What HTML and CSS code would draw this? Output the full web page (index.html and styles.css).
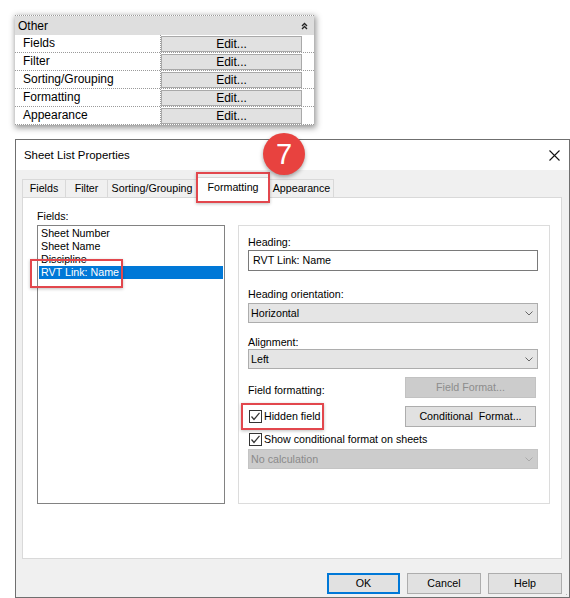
FILE: index.html
```html
<!DOCTYPE html>
<html>
<head>
<meta charset="utf-8">
<link rel="stylesheet" href="styles.css">
</head>
<body>
<div class="props">
  <div class="props-head"><span>Other</span>
    <svg class="collapse" width="7" height="8" viewBox="0 0 7 8"><polyline points="1,4 3.5,1.5 6,4" fill="none" stroke="#222" stroke-width="1.3"/><polyline points="1,7 3.5,4.5 6,7" fill="none" stroke="#222" stroke-width="1.3"/></svg>
  </div>
  <div class="prow"><div class="pname">Fields</div><div class="pval"><div class="edit">Edit...</div></div></div>
  <div class="prow"><div class="pname">Filter</div><div class="pval"><div class="edit">Edit...</div></div></div>
  <div class="prow"><div class="pname">Sorting/Grouping</div><div class="pval"><div class="edit">Edit...</div></div></div>
  <div class="prow"><div class="pname">Formatting</div><div class="pval"><div class="edit">Edit...</div></div></div>
  <div class="prow"><div class="pname">Appearance</div><div class="pval"><div class="edit">Edit...</div></div></div>
</div>

<div class="dialog">
  <div class="titlebar">
    <span class="title">Sheet List Properties</span>
    <svg width="11" height="11" viewBox="0 0 11 11"><path d="M0.5 0.5 L10.5 10.5 M10.5 0.5 L0.5 10.5" stroke="#111" stroke-width="1.1" fill="none"/></svg>
  </div>
  <div class="dbody">
    <div class="tabs">
      <div class="tab t-fields">Fields</div>
      <div class="tab t-filter">Filter</div>
      <div class="tab t-sort">Sorting/Grouping</div>
      <div class="tab t-format active">Formatting</div>
      <div class="tab t-appear">Appearance</div>
    </div>
    <div class="panel">
      <div class="fields-col">
        <div class="lbl">Fields:</div>
        <div class="listbox">
          <div class="item">Sheet Number</div>
          <div class="item">Sheet Name</div>
          <div class="item">Discipline</div>
          <div class="item sel">RVT Link: Name</div>
        </div>
      </div>
      <div class="group">
        <div class="lbl l-heading">Heading:</div>
        <div class="input">RVT Link: Name</div>
        <div class="lbl l-orient">Heading orientation:</div>
        <div class="select"><span>Horizontal</span><svg width="8" height="5" viewBox="0 0 8 5"><polyline points="0.5,0.5 4,4 7.5,0.5" fill="none" stroke="#666" stroke-width="1"/></svg></div>
        <div class="lbl l-align">Alignment:</div>
        <div class="select"><span>Left</span><svg width="8" height="5" viewBox="0 0 8 5"><polyline points="0.5,0.5 4,4 7.5,0.5" fill="none" stroke="#666" stroke-width="1"/></svg></div>
        <div class="row r-ff">
          <div class="lbl l-ff">Field formatting:</div>
          <div class="btn disabled">Field Format...</div>
        </div>
        <div class="row r-hidden">
          <div class="check"><span class="box"><svg width="11" height="11" viewBox="0 0 11 11"><polyline points="1.5,5.5 4,8.5 9.5,1.8" fill="none" stroke="#333" stroke-width="1.2"/></svg></span>Hidden field</div>
          <div class="btn">Conditional &nbsp;Format...</div>
        </div>
        <div class="check c-show"><span class="box"><svg width="11" height="11" viewBox="0 0 11 11"><polyline points="1.5,5.5 4,8.5 9.5,1.8" fill="none" stroke="#333" stroke-width="1.2"/></svg></span>Show conditional format on sheets</div>
        <div class="select disabled"><span>No calculation</span><svg width="8" height="5" viewBox="0 0 8 5"><polyline points="0.5,0.5 4,4 7.5,0.5" fill="none" stroke="#aaa" stroke-width="1"/></svg></div>
      </div>
    </div>
    <div class="buttons">
      <div class="btn dlg default">OK</div>
      <div class="btn dlg">Cancel</div>
      <div class="btn dlg">Help</div>
    </div>
  </div>
</div>

<div class="hl hl-tab"></div>
<div class="hl hl-item"></div>
<div class="hl hl-check"></div>
<div class="badge">7</div>
</body>
</html>
```

FILE: styles.css
```css
* { box-sizing: border-box; }
html, body { margin: 0; padding: 0; background: #fff; }
body {
  width: 570px;
  height: 598px;
  overflow: hidden;
  font-family: "Liberation Sans", Arial, sans-serif;
  color: #000;
}

/* ---- properties palette ---- */
.props {
  margin: 15px 0 0 15px;
  width: 299px;
  background: #fff;
  border-top: 1px dotted #9a9a9a;
  box-shadow: 1px 2px 6px 1px rgba(0,0,0,0.42);
  font-size: 12px;
}
.props-head {
  height: 19px;
  background: #dedede;
  display: flex;
  align-items: center;
  justify-content: space-between;
  padding: 0 6px 0 3px;
}
.prow {
  display: flex;
  height: 18px;
  border-bottom: 1px dotted #9a9a9a;
}
.pname {
  width: 146px;
  padding-left: 8px;
  border-right: 1px dotted #9a9a9a;
  line-height: 17px;
}
.pval {
  flex: 1;
  display: flex;
  align-items: center;
  padding-right: 12px;
}
.edit {
  width: 141px;
  height: 16px;
  background: #e1e1e1;
  border: 1px solid #a9a9a9;
  text-align: center;
  line-height: 14px;
  font-size: 12px;
}

/* ---- dialog ---- */
.dialog {
  margin: 14px 0 0 15px;
  width: 555px;
  height: 459px;
  border: 1px solid #6f6f6f;
  font-size: 10.7px;
}
.titlebar {
  height: 30px;
  background: #fff;
  display: flex;
  align-items: center;
  justify-content: space-between;
  padding: 0 9px 0 8px;
}
.title { font-size: 11.4px; }
.dbody {
  height: 427px;
  background: #f0f0f0;
  padding: 7px 7px 0 6px;
  background-image:
    radial-gradient(circle, #b5b5b5 0.8px, transparent 1px);
  background-size: 3px 3px;
  background-position: right 1px bottom 1px;
  background-repeat: no-repeat;
}
.tabs {
  display: flex;
  align-items: flex-end;
  height: 20px;
}
.tab {
  height: 18px;
  border: 1px solid #d9d9d9;
  border-bottom: none;
  background: #f0f0f0;
  margin-left: -1px;
  text-align: center;
  line-height: 17px;
}
.t-fields { width: 44px; margin-left: 0; }
.t-filter { width: 43px; }
.t-sort { width: 90px; }
.t-format { width: 74px; }
.t-appear { width: 65px; }
.tab.active {
  height: 21px;
  margin-bottom: -1px;
  background: #fff;
  position: relative;
  z-index: 2;
  line-height: 19px;
}

.panel {
  width: 540px;
  height: 362px;
  background: #fff;
  border: 1px solid #d9d9d9;
  display: flex;
  align-items: flex-start;
  padding: 12px 0 0 14px;
}
.lbl { line-height: 13px; height: 13px; white-space: nowrap; }
.fields-col .lbl { margin-bottom: 2px; }
.listbox {
  width: 188px;
  height: 279px;
  border: 1px solid #828282;
  padding: 1px 1px 0 1px;
}
.item {
  height: 13px;
  line-height: 13px;
  padding-left: 2px;
  white-space: nowrap;
}
.item.sel { background: #0078d7; color: #fff; }

.group {
  margin: 15px 0 0 13px;
  width: 312px;
  height: 279px;
  border: 1px solid #dcdcdc;
  padding: 10px 11px 0 9px;
}
.input {
  margin-top: 1px;
  height: 21px;
  border: 1px solid #7a7a7a;
  background: #fff;
  padding-left: 4px;
  line-height: 19px;
}
.l-orient { margin-top: 17px; }
.select {
  margin-top: 2px;
  height: 20px;
  background: #e5e5e5;
  border: 1px solid #adadad;
  display: flex;
  align-items: center;
  justify-content: space-between;
  padding: 0 4px 0 2px;
}
.l-align { margin-top: 13px; }
.l-align + .select { margin-top: 0; }
.row {
  display: flex;
  justify-content: space-between;
  align-items: flex-start;
}
.r-ff { margin-top: 8px; }
.l-ff { margin-top: 7px; }
.btn {
  width: 131px;
  height: 21px;
  margin-right: 2px;
  background: #e1e1e1;
  border: 1px solid #adadad;
  text-align: center;
  line-height: 19px;
  white-space: nowrap;
}
.btn.disabled {
  background: #cccccc;
  border-color: #c2c2c2;
  color: #8d8d8d;
}
.r-hidden { margin-top: 8px; align-items: center; }
.check {
  display: flex;
  align-items: center;
  margin-left: 1px;
  line-height: 13px;
  white-space: nowrap;
}
.box {
  width: 13px;
  height: 13px;
  border: 1px solid #333;
  background: #fff;
  margin-right: 2px;
  display: flex;
  align-items: center;
  justify-content: center;
}
.c-show { margin-top: 6px; }
.c-show + .select { margin-top: 3px; }
.select.disabled {
  background: #cccccc;
  border-color: #c4c4c4;
  color: #8a8a8a;
}

.buttons {
  margin-top: 14px;
  display: flex;
  justify-content: flex-end;
  gap: 7px;
}
.btn.dlg { width: 74px; margin-right: 0; }
.btn.default { border: 2px solid #0078d7; width: 73px; line-height: 17px; }

/* ---- annotation overlays ---- */
.hl {
  position: absolute;
  border: 2px solid #e2474d;
  box-shadow: 0 1px 3px rgba(0,0,0,0.25);
  z-index: 5;
}
.hl-tab { left: 196px; top: 172px; width: 74px; height: 31px; }
.hl-item { left: 30px; top: 259px; width: 93px; height: 29px; }
.hl-check { left: 241px; top: 403px; width: 83px; height: 27px; }
.badge {
  position: absolute;
  left: 263px;
  top: 133px;
  width: 42px;
  height: 42px;
  border-radius: 50%;
  background: #e8423f;
  box-shadow: 0 2px 4px rgba(0,0,0,0.35);
  color: #fff;
  font-size: 29px;
  line-height: 42px;
  text-align: center;
  z-index: 6;
}
```
